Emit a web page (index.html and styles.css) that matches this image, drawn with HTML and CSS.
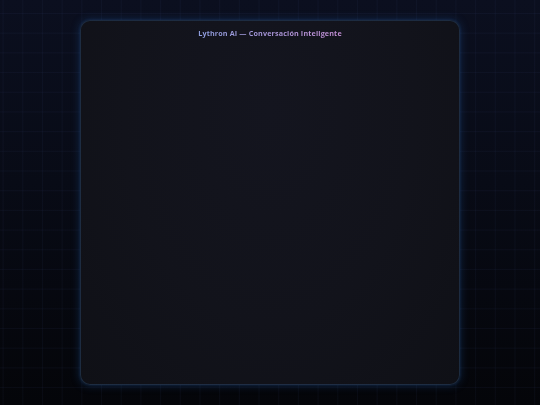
FILE: index.html
```html
<!DOCTYPE html>
<html lang="es">
<head>
<meta charset="utf-8">
<title>Lythron AI</title>
<link rel="stylesheet" href="styles.css">
</head>
<body>
<div class="stage">
  <main class="card">
    <h1 class="title">Lythron AI — Conversación Inteligente</h1>
  </main>
</div>
</body>
</html>
```

FILE: styles.css
```css
html, body {
  margin: 0;
  height: 100%;
}
body {
  width: 540px;
  height: 405px;
  overflow: hidden;
  background-color: #07080e;
  background-image:
    linear-gradient(to right, rgba(70, 90, 150, 0.075) 1px, transparent 1px),
    linear-gradient(to bottom, rgba(70, 90, 150, 0.075) 1px, transparent 1px),
    linear-gradient(to bottom, #0b0f1f 0%, #080b16 45%, #040509 100%);
  background-size: 19.7px 19.7px, 19.7px 19.7px, 100% 100%;
  background-position: 2.6px 13px, 2.6px 13px, 0 0;
  font-family: "Open Sans", "Liberation Sans", sans-serif;
}
.stage {
  display: flex;
  justify-content: center;
  padding-top: 20px;
}
.card {
  box-sizing: border-box;
  width: 380px;
  height: 365px;
  border: 1px solid rgba(60, 105, 160, 0.3);
  border-radius: 10px;
  background:
    radial-gradient(ellipse at 50% 25%, #14151f 0%, #12131b 55%, #0f1016 100%);
  box-shadow: 0 0 9px 1px rgba(35, 95, 170, 0.28), 0 0 3px rgba(60, 120, 190, 0.25);
  display: flex;
  flex-direction: column;
  align-items: center;
}
.title {
  margin: 0;
  padding-top: 7px;
  font-size: 7.2px;
  font-weight: 700;
  letter-spacing: 0.15px;
  line-height: 10px;
  background: linear-gradient(to right, #8f9fe0, #c58fd6);
  -webkit-background-clip: text;
  background-clip: text;
  color: transparent;
}
```
